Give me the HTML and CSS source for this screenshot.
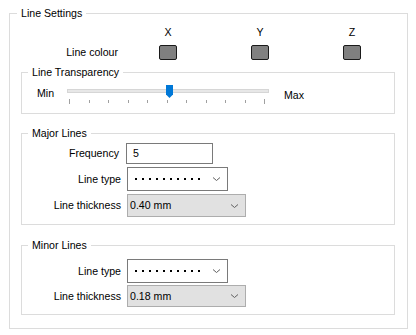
FILE: index.html
```html
<!DOCTYPE html>
<html lang="en">
<head>
    <meta charset="UTF-8">
    <title>Line Settings</title>
    <link rel="stylesheet" href="styles.css">
</head>
<body>

    <fieldset class="group outer">
        <legend>Line Settings</legend>

        <div class="colours">
            <span></span>
            <span class="axis">X</span>
            <span class="axis">Y</span>
            <span class="axis">Z</span>
            <span class="colour-label">Line colour</span>
            <span class="swatch"></span>
            <span class="swatch"></span>
            <span class="swatch"></span>
        </div>

        <!-- TRANSPARENCY -->
        <fieldset class="group inner transparency">
            <legend>Line Transparency</legend>
            <div class="slider-row">
                <span class="min">Min</span>
                <div class="slider">
                    <div class="track"></div>
                    <div class="ticks">
                        <i class="end"></i><i></i><i></i><i></i><i></i><i></i><i></i><i></i><i></i><i></i><i class="end"></i>
                    </div>
                    <svg class="thumb" width="7" height="13" viewBox="0 0 7 13">
                        <path d="M0 0H7V9.5L3.5 13L0 9.5Z" fill="#0078d7"/>
                    </svg>
                </div>
                <span class="max">Max</span>
            </div>
        </fieldset>

        <!-- MAJOR LINES -->
        <fieldset class="group inner major">
            <legend>Major Lines</legend>
            <div class="row freq">
                <label>Frequency</label>
                <div class="text-input">5</div>
            </div>
            <div class="row">
                <label>Line type</label>
                <div class="combo white">
                    <span class="dots"></span>
                    <svg class="chev" width="7" height="4" viewBox="0 0 7 4"><path d="M0 0.5L3.5 3.5L7 0.5" fill="none" stroke="#606060"/></svg>
                </div>
            </div>
            <div class="row">
                <label>Line thickness</label>
                <div class="combo gray tall">
                    <span>0.40 mm</span>
                    <svg class="chev" width="7" height="4" viewBox="0 0 7 4"><path d="M0 0.5L3.5 3.5L7 0.5" fill="none" stroke="#606060"/></svg>
                </div>
            </div>
        </fieldset>

        <!-- MINOR LINES -->
        <fieldset class="group inner minor">
            <legend>Minor Lines</legend>
            <div class="row">
                <label>Line type</label>
                <div class="combo white">
                    <span class="dots"></span>
                    <svg class="chev" width="7" height="4" viewBox="0 0 7 4"><path d="M0 0.5L3.5 3.5L7 0.5" fill="none" stroke="#606060"/></svg>
                </div>
            </div>
            <div class="row">
                <label>Line thickness</label>
                <div class="combo gray">
                    <span>0.18 mm</span>
                    <svg class="chev" width="7" height="4" viewBox="0 0 7 4"><path d="M0 0.5L3.5 3.5L7 0.5" fill="none" stroke="#606060"/></svg>
                </div>
            </div>
        </fieldset>
    </fieldset>

</body>
</html>
```

FILE: styles.css
```css
:root {
    --frame: #dcdcdc;
    --edge: #7a7a7a;
    --text: #000;
    --font-ui: 'Liberation Sans', Arial, sans-serif;
}

* { box-sizing: border-box; }

body {
    margin: 0;
    padding: 7px 0 0 9px;
    background: #fff;
    color: var(--text);
    font-family: var(--font-ui);
    font-size: 10.6px;
    line-height: 13px;
}

.group {
    margin: 0;
    min-width: 0;
    border: 1px solid var(--frame);
}

.group legend {
    padding: 0 4px;
    margin-left: -4px;
    line-height: 13px;
}

.outer {
    width: 399px;
    padding: 6px 12px 13px 11px;
}

.inner {
    padding: 0 10px;
}

/* colours */
.colours {
    display: grid;
    grid-template-columns: 101px repeat(3, 92px);
    grid-template-rows: 13px 15px;
    row-gap: 6px;
}

.axis {
    text-align: center;
}

.colour-label {
    text-align: right;
    padding-right: 4px;
    align-self: center;
}

.swatch {
    justify-self: center;
    width: 18px;
    height: 15px;
    background: #808080;
    border: 1px solid #1a1a1a;
    border-radius: 2px;
}

/* transparency */
.transparency {
    margin-top: 6px;
    padding-top: 6px;
    padding-bottom: 9px;
}

.slider-row {
    display: flex;
    align-items: flex-start;
}

.min {
    width: 30px;
    margin-left: 5px;
    margin-top: 2px;
}

.max {
    margin-left: 15px;
    margin-top: 4px;
}

.slider {
    position: relative;
    width: 202px;
    height: 19px;
}

.track {
    margin-top: 4px;
    height: 4px;
    background: #e7e7e7;
    border: 1px solid #d6d6d6;
}

.ticks {
    display: flex;
    justify-content: space-between;
    align-items: flex-start;
    margin: 6px 4px 0 2px;
}

.ticks i {
    width: 1px;
    height: 3px;
    margin-top: 1px;
    background: #a0a0a0;
}

.ticks i.end {
    height: 5px;
    margin-top: 0;
}

.thumb {
    position: absolute;
    left: 99px;
    top: 0;
    display: block;
}

/* line groups */
.major {
    margin-top: 13px;
    padding-top: 3px;
    padding-bottom: 7px;
}

.minor {
    margin-top: 14px;
    padding-top: 5px;
    padding-bottom: 7px;
}

.row {
    display: flex;
    align-items: center;
    gap: 6px;
    margin-top: 2px;
}

.major .row { margin-top: 3px; }
.major .row.freq { margin-top: 0; margin-bottom: 3px; }

.row label {
    width: 89px;
    text-align: right;
}

.freq label { padding-right: 2px; }

.text-input {
    width: 87px;
    height: 21px;
    margin-left: -1px;
    padding-left: 6px;
    border: 1px solid var(--edge);
    display: flex;
    align-items: center;
}

.combo {
    display: flex;
    align-items: center;
    justify-content: space-between;
    height: 22px;
    padding: 0 7px 0 2px;
    border: 1px solid var(--edge);
}

.combo.white {
    width: 101px;
    height: 24px;
    padding-left: 7px;
    background: #fff;
}

.combo.gray {
    width: 119px;
    background: #e1e1e1;
    border-color: #adadad;
}

.combo.tall { height: 23px; }

.dots {
    width: 65px;
    height: 2px;
    background: repeating-linear-gradient(to right, #000 0 2px, transparent 2px 7px);
}

.chev { display: block; }
```
